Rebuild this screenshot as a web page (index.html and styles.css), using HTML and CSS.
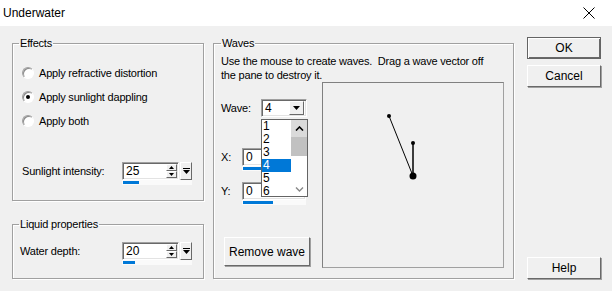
FILE: index.html
```html
<!DOCTYPE html>
<html lang="en">
<head>
  <meta charset="UTF-8">
  <title>Underwater</title>
  <link rel="stylesheet" href="styles.css">
</head>
<body>
  <div class="titlebar">
    <span class="title">Underwater</span>
    <svg class="close" width="12" height="12" viewBox="0 0 12 12">
      <path d="M0.5 0.5 L11.5 11.5 M11.5 0.5 L0.5 11.5" stroke="#000" stroke-width="1" fill="none"/>
    </svg>
  </div>

  <div class="dialog">
    <div class="col-left">
      <fieldset class="group effects">
        <legend>Effects</legend>
        <label class="radio"><span class="radio-dot"></span>Apply refractive distortion</label>
        <label class="radio"><span class="radio-dot checked"></span>Apply sunlight dappling</label>
        <label class="radio"><span class="radio-dot"></span>Apply both</label>
        <div class="field-row intensity">
          <span class="field-label">Sunlight intensity:</span>
          <div class="spin">
            <div class="spin-field">
              <div class="spin-edit">
                <span class="spin-value">25</span>
                <div class="spin-arrows">
                  <span class="spin-btn"><svg width="5" height="3" viewBox="0 0 5 3"><path d="M2.5 0 L5 3 L0 3 Z" fill="#000"/></svg></span>
                  <span class="spin-btn"><svg width="5" height="3" viewBox="0 0 5 3"><path d="M0 0 L5 0 L2.5 3 Z" fill="#000"/></svg></span>
                </div>
              </div>
              <span class="spin-more"><svg width="7" height="7" viewBox="0 0 7 7"><path d="M0 0.5 H7" stroke="#000"/><path d="M0 2 H7 L3.5 6 Z" fill="#000"/></svg></span>
            </div>
            <div class="spin-track"><span class="spin-level" style="width:16px"></span></div>
          </div>
        </div>
      </fieldset>

      <fieldset class="group liquid">
        <legend>Liquid properties</legend>
        <div class="field-row">
          <span class="field-label depth">Water depth:</span>
          <div class="spin">
            <div class="spin-field">
              <div class="spin-edit">
                <span class="spin-value">20</span>
                <div class="spin-arrows">
                  <span class="spin-btn"><svg width="5" height="3" viewBox="0 0 5 3"><path d="M2.5 0 L5 3 L0 3 Z" fill="#000"/></svg></span>
                  <span class="spin-btn"><svg width="5" height="3" viewBox="0 0 5 3"><path d="M0 0 L5 0 L2.5 3 Z" fill="#000"/></svg></span>
                </div>
              </div>
              <span class="spin-more"><svg width="7" height="7" viewBox="0 0 7 7"><path d="M0 0.5 H7" stroke="#000"/><path d="M0 2 H7 L3.5 6 Z" fill="#000"/></svg></span>
            </div>
            <div class="spin-track"><span class="spin-level" style="width:12px"></span></div>
          </div>
        </div>
      </fieldset>
    </div>

    <fieldset class="group waves">
      <legend>Waves</legend>
      <p class="hint">Use the mouse to create waves.&nbsp; Drag a wave vector off<br>the pane to destroy it.</p>
      <div class="waves-body">
        <div class="wave-controls">
          <div class="ctl-row wave-row">
            <span class="ctl-label wide">Wave:</span>
            <div class="combo">
              <span class="combo-value">4</span>
              <span class="combo-btn"><svg width="7" height="4" viewBox="0 0 7 4"><path d="M0 0 H7 L3.5 4 Z" fill="#000"/></svg></span>
            </div>
            <div class="drop-list">
              <ul class="drop-items">
                <li>1</li>
                <li>2</li>
                <li>3</li>
                <li class="selected">4</li>
                <li>5</li>
                <li>6</li>
              </ul>
              <div class="scrollbar">
                <span class="sb-up"><svg width="9" height="5" viewBox="0 0 9 5"><path d="M1 4.5 L4.5 1 L8 4.5" stroke="#000" stroke-width="1.6" fill="none"/></svg></span>
                <span class="sb-thumb"></span>
                <span class="sb-track"></span>
                <span class="sb-down"><svg width="9" height="5" viewBox="0 0 9 5"><path d="M1 0.5 L4.5 4 L8 0.5" stroke="#888" stroke-width="1.4" fill="none"/></svg></span>
              </div>
            </div>
          </div>
          <div class="ctl-row x-row">
            <span class="ctl-label">X:</span>
            <div class="spin small">
              <div class="spin-field">
                <div class="spin-edit"><span class="spin-value">0</span></div>
              </div>
              <div class="spin-track"><span class="spin-level" style="width:30px"></span></div>
            </div>
          </div>
          <div class="ctl-row y-row">
            <span class="ctl-label">Y:</span>
            <div class="spin small">
              <div class="spin-field">
                <div class="spin-edit"><span class="spin-value">0</span></div>
              </div>
              <div class="spin-track"><span class="spin-level" style="width:30px"></span></div>
            </div>
          </div>
          <button class="btn remove">Remove wave</button>
        </div>

        <div class="pane">
          <svg width="180" height="184" viewBox="0 0 180 184">
            <line x1="66" y1="33" x2="90" y2="93" stroke="#000" stroke-width="1"/>
            <line x1="90" y1="60" x2="90" y2="93" stroke="#000" stroke-width="1.5"/>
            <circle cx="66" cy="33" r="2" fill="#000"/>
            <circle cx="90" cy="60" r="2" fill="#000"/>
            <circle cx="90" cy="93" r="3.5" fill="#000"/>
          </svg>
        </div>
      </div>
    </fieldset>

    <div class="col-buttons">
      <button class="btn default">OK</button>
      <button class="btn">Cancel</button>
      <button class="btn help">Help</button>
    </div>
  </div>
</body>
</html>
```

FILE: styles.css
```css
body {
  margin: 0;
  width: 612px;
  height: 291px;
  overflow: hidden;
  background: #f0f0f0;
  font-family: "Liberation Sans", Arial, sans-serif;
  font-size: 11px;
  letter-spacing: -0.2px;
  color: #000;
}

/* Title bar */
.titlebar {
  height: 26px;
  background: #fff;
  display: flex;
  align-items: center;
  justify-content: space-between;
  padding: 0 17px 0 3px;
}

.title {
  font-size: 12px;
  letter-spacing: 0;
}

/* Main dialog layout */
.dialog {
  display: flex;
  align-items: flex-start;
  padding: 11px 11px 0 12px;
}

.col-left {
  width: 192px;
  display: flex;
  flex-direction: column;
  gap: 17px;
}

.group {
  margin: 0;
  min-width: 0;
  border: 1px solid #a0a0a0;
  box-shadow: 1px 1px 0 #fff, inset 1px 1px 0 #fff;
}

.group legend {
  padding: 0 1px;
  line-height: 13px;
}

.effects {
  height: 164px;
  box-sizing: border-box;
  padding: 11px 8px 0 9px;
}

.effects legend {
  margin-left: -3px;
}

.liquid {
  height: 61px;
  box-sizing: border-box;
  padding: 11px 8px 0 7px;
}

.liquid legend {
  margin-left: -1px;
}

.waves {
  width: 301px;
  height: 242px;
  box-sizing: border-box;
  margin-left: 9px;
  padding: 4px 8px 0 7px;
}

.waves legend {
  margin-left: 0;
}

/* Radio buttons */
.radio {
  display: flex;
  align-items: center;
  height: 24px;
}

.radio-dot {
  width: 10px;
  height: 10px;
  margin-right: 5px;
  border-radius: 50%;
  border: 1px solid;
  border-color: #a0a0a0 #fff #fff #a0a0a0;
  background: #fff;
  box-shadow: inset 1px 1px 0 #8a8a8a;
  position: relative;
}

.radio-dot.checked::after {
  content: "";
  position: absolute;
  left: 3px;
  top: 3px;
  width: 4px;
  height: 4px;
  border-radius: 50%;
  background: #000;
}

/* Label + spin rows */
.field-row {
  display: flex;
  align-items: flex-start;
}

.intensity {
  margin-top: 29px;
}

.field-label {
  width: 100px;
  line-height: 18px;
}

.field-label.depth {
  width: 102px;
}

.spin {
  width: 70px;
}

.spin-field {
  display: flex;
  height: 18px;
}

.spin-edit {
  flex: 1;
  display: flex;
  align-items: center;
  justify-content: space-between;
  background: #fff;
  border: 1px solid;
  border-color: #a0a0a0 #fff #fff #a0a0a0;
  box-shadow: inset 1px 1px 0 #696969, inset -1px -1px 0 #e3e3e3;
  padding: 1px 1px 1px 3px;
  box-sizing: border-box;
}

.spin-value {
  font-size: 12px;
  line-height: 14px;
  letter-spacing: 0;
}

.spin-arrows {
  display: flex;
  flex-direction: column;
}

.spin-btn {
  width: 11px;
  height: 7px;
  box-sizing: border-box;
  display: flex;
  align-items: center;
  justify-content: center;
  background: #f0f0f0;
  border: 1px solid;
  border-color: #fff #696969 #696969 #fff;
}

.spin-more {
  width: 12px;
  margin-left: 1px;
  box-sizing: border-box;
  display: flex;
  align-items: center;
  justify-content: center;
  background: #f0f0f0;
  border: 1px solid;
  border-color: #fff #696969 #696969 #fff;
}

.spin-track {
  height: 5px;
  background: #fafafa;
  display: flex;
  align-items: center;
}

.spin-level {
  display: block;
  height: 3px;
  margin-left: 1px;
  background: #0078d7;
}

/* Waves group */
.hint {
  margin: 0;
  line-height: 14px;
}

.waves-body {
  display: flex;
  align-items: flex-start;
}

.wave-controls {
  width: 101px;
  display: flex;
  flex-direction: column;
  padding-top: 17px;
}

.ctl-row {
  display: flex;
  align-items: flex-start;
  position: relative;
}

.ctl-label {
  width: 21px;
  line-height: 18px;
}

.ctl-label.wide {
  width: 40px;
}

.x-row {
  margin-top: 31px;
}

.y-row {
  margin-top: 11px;
}

.spin.small {
  width: 64px;
}

.combo {
  width: 46px;
  height: 18px;
  box-sizing: border-box;
  display: flex;
  align-items: center;
  justify-content: space-between;
  background: #fff;
  border: 1px solid;
  border-color: #a0a0a0 #fff #fff #a0a0a0;
  box-shadow: inset 1px 1px 0 #696969, inset -1px -1px 0 #e3e3e3;
  padding: 2px 2px 2px 3px;
}

.combo-value {
  font-size: 12px;
}

.combo-btn {
  width: 15px;
  height: 14px;
  box-sizing: border-box;
  display: flex;
  align-items: center;
  justify-content: center;
  background: #f0f0f0;
  border: 1px solid;
  border-color: #fff #696969 #696969 #fff;
}

/* Open drop-down list */
.drop-list {
  position: absolute;
  left: 40px;
  top: 20px;
  width: 47px;
  height: 78px;
  box-sizing: border-box;
  border: 1px solid #646464;
  background: #fff;
  display: flex;
  overflow: hidden;
  z-index: 2;
}

.drop-items {
  list-style: none;
  margin: 0;
  padding: 0;
  flex: 1;
}

.drop-items li {
  height: 13px;
  line-height: 13px;
  font-size: 12px;
  padding-left: 1px;
}

.drop-items li.selected {
  background: #0078d7;
  color: #fff;
}

.scrollbar {
  width: 16px;
  display: flex;
  flex-direction: column;
}

.sb-up {
  height: 17px;
  display: flex;
  align-items: center;
  justify-content: center;
  background: #dadada;
}

.sb-thumb {
  height: 19px;
  background: #c1c1c1;
}

.sb-track {
  flex: 1;
  background: #fff;
}

.sb-down {
  height: 14px;
  display: flex;
  align-items: center;
  justify-content: center;
}

/* Buttons */
.btn {
  font-family: inherit;
  font-size: 12px;
  letter-spacing: 0;
  color: #000;
  background: #f0f0f0;
  border: 1px solid;
  border-color: #fff #696969 #696969 #fff;
  box-shadow: 1px 1px 0 #a0a0a0;
  padding: 0;
}

.remove {
  width: 86px;
  height: 29px;
  margin: 32px 0 0 3px;
}

.pane {
  width: 182px;
  height: 186px;
  box-sizing: border-box;
  border: 1px solid #a0a0a0;
  border-top-color: #808080;
  border-left-color: #808080;
}

.pane svg {
  display: block;
}

.col-buttons {
  width: 74px;
  height: 242px;
  margin-left: 13px;
  display: flex;
  flex-direction: column;
  gap: 6px;
}

.col-buttons .btn {
  height: 22px;
}

.btn.default {
  border: 1px solid #646464;
  box-shadow: inset 1px 1px 0 #fff, inset -1px -1px 0 #696969;
}

.btn.help {
  margin-top: auto;
}
```
